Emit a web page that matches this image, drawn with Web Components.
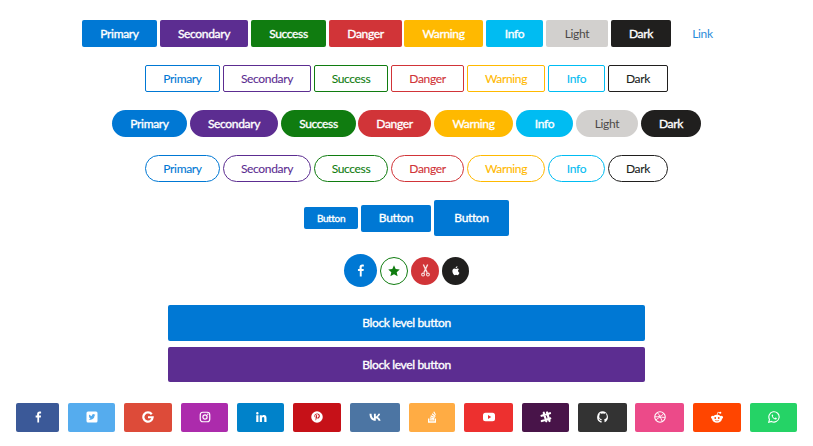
<!DOCTYPE html>
<html>
<head>
<meta charset="utf-8">
<title>Buttons</title>
<style>
  body { margin: 0; background: #fff; font-family: Lato, sans-serif; }
</style>
</head>
<body>
<demo-page>
  <btn-row>
    <x-btn color="primary" w="75">Primary</x-btn>
    <x-btn color="secondary" w="88">Secondary</x-btn>
    <x-btn color="success" w="75">Success</x-btn>
    <x-btn color="danger" w="73">Danger</x-btn>
    <x-btn color="warning" w="79" style="margin-left:-1px">Warning</x-btn>
    <x-btn color="info" w="57">Info</x-btn>
    <x-btn color="light" w="62">Light</x-btn>
    <x-btn color="dark" w="60">Dark</x-btn>
    <x-btn color="link" w="57">Link</x-btn>
  </btn-row>
  <btn-row>
    <x-btn color="primary" w="75" outline>Primary</x-btn>
    <x-btn color="secondary" w="88" outline>Secondary</x-btn>
    <x-btn color="success" w="74" outline>Success</x-btn>
    <x-btn color="danger" w="73" outline>Danger</x-btn>
    <x-btn color="warning" w="78" outline>Warning</x-btn>
    <x-btn color="info" w="57" outline>Info</x-btn>
    <x-btn color="dark" w="60" outline>Dark</x-btn>
  </btn-row>
  <btn-row>
    <x-btn color="primary" w="75" pill>Primary</x-btn>
    <x-btn color="secondary" w="88" pill>Secondary</x-btn>
    <x-btn color="success" w="75" pill>Success</x-btn>
    <x-btn color="danger" w="73" pill style="margin-left:-1px">Danger</x-btn>
    <x-btn color="warning" w="79" pill>Warning</x-btn>
    <x-btn color="info" w="57" pill>Info</x-btn>
    <x-btn color="light" w="62" pill>Light</x-btn>
    <x-btn color="dark" w="60" pill>Dark</x-btn>
  </btn-row>
  <btn-row>
    <x-btn color="primary" w="75" outline pill>Primary</x-btn>
    <x-btn color="secondary" w="88" outline pill>Secondary</x-btn>
    <x-btn color="success" w="74" outline pill>Success</x-btn>
    <x-btn color="danger" w="73" outline pill>Danger</x-btn>
    <x-btn color="warning" w="78" outline pill>Warning</x-btn>
    <x-btn color="info" w="57" outline pill>Info</x-btn>
    <x-btn color="dark" w="60" outline pill>Dark</x-btn>
  </btn-row>
  <btn-row>
    <x-btn color="primary" w="54" h="22" fs="10">Button</x-btn>
    <x-btn color="primary" w="70">Button</x-btn>
    <x-btn color="primary" w="75" h="36">Button</x-btn>
  </btn-row>
  <btn-row>
    <x-btn color="primary" w="33" h="33" circle><x-icon name="facebook" size="13"></x-icon></x-btn>
    <x-btn color="success" w="28" h="28" circle outline><x-icon name="star" size="12"></x-icon></x-btn>
    <x-btn color="danger" w="28" h="28" circle><x-icon name="scissors" size="13"></x-icon></x-btn>
    <x-btn color="dark" w="27" h="28" circle><x-icon name="apple" size="11"></x-icon></x-btn>
  </btn-row>
  <btn-block>
    <x-btn color="primary" h="36" block>Block level button</x-btn>
    <x-btn color="secondary" h="35" block>Block level button</x-btn>
  </btn-block>
  <social-row>
    <x-btn bg="#3b5998" w="43" h="29"><x-icon name="facebook"></x-icon></x-btn>
    <x-btn bg="#55acee" w="47" h="29"><x-icon name="twitter"></x-icon></x-btn>
    <x-btn bg="#dd4b39" w="48" h="29"><x-icon name="google"></x-icon></x-btn>
    <x-btn bg="#ac2bac" w="47" h="29"><x-icon name="instagram"></x-icon></x-btn>
    <x-btn bg="#0082ca" w="47" h="29"><x-icon name="linkedin"></x-icon></x-btn>
    <x-btn bg="#c61118" w="48" h="29"><x-icon name="pinterest"></x-icon></x-btn>
    <x-btn bg="#4c75a3" w="50" h="29"><x-icon name="vk"></x-icon></x-btn>
    <x-btn bg="#ffac44" w="46" h="29"><x-icon name="stack"></x-icon></x-btn>
    <x-btn bg="#ed302f" w="49" h="29"><x-icon name="youtube"></x-icon></x-btn>
    <x-btn bg="#481449" w="47" h="29"><x-icon name="slack"></x-icon></x-btn>
    <x-btn bg="#333333" w="49" h="29"><x-icon name="github"></x-icon></x-btn>
    <x-btn bg="#ec4a89" w="49" h="29" style="margin-left:-1px"><x-icon name="dribbble"></x-icon></x-btn>
    <x-btn bg="#ff4500" w="48" h="29"><x-icon name="reddit"></x-icon></x-btn>
    <x-btn bg="#25d366" w="47" h="29"><x-icon name="whatsapp"></x-icon></x-btn>
  </social-row>
</demo-page>

<script>
// colours for the color="" attribute of x-btn
const COLORS = {
  primary: "#0078d4",
  secondary: "#5c2d91",
  success: "#107c10",
  danger: "#d13438",
  warning: "#ffb900",
  info: "#00bcf2",
  light: "#d2d0ce",
  dark: "#201f1e",
};

// the page column, holds all the rows
class DemoPage extends HTMLElement {
  connectedCallback() {
    const shadow = this.attachShadow({ mode: "open" });
    shadow.innerHTML = `<style>
      :host { display: flex; flex-direction: column; align-items: center; gap: 18px; padding: 20px 0 14px; box-sizing: border-box; }
    </style><slot></slot>`;
  }
}

class BtnRow extends HTMLElement {
  connectedCallback() {
    const shadow = this.attachShadow({ mode: "open" });
    shadow.innerHTML = `<style>
      :host { display: flex; align-items: center; justify-content: center; gap: 3px; }
    </style><slot></slot>`;
  }
}

class BtnBlock extends HTMLElement {
  connectedCallback() {
    const shadow = this.attachShadow({ mode: "open" });
    shadow.innerHTML = `<style>
      :host { display: flex; flex-direction: column; gap: 6px; width: 477px; }
    </style><slot></slot>`;
  }
}

class SocialRow extends HTMLElement {
  connectedCallback() {
    const shadow = this.attachShadow({ mode: "open" });
    shadow.innerHTML = `<style>
      :host { display: flex; justify-content: center; gap: 9px; margin-top: 3px; }
    </style><slot></slot>`;
  }
}

class XBtn extends HTMLElement {
  connectedCallback() {
    const shadow = this.attachShadow({ mode: "open" });
    const name = this.getAttribute("color");
    const isLink = name === "link";
    const base = this.getAttribute("bg") || COLORS[name] || "#0078d4";
    const outline = this.hasAttribute("outline");
    const pill = this.hasAttribute("pill");
    const circle = this.hasAttribute("circle");
    const block = this.hasAttribute("block");
    const w = this.getAttribute("w");
    const h = this.getAttribute("h") || 27;
    const fs = this.getAttribute("fs") || 12;

    let background = base;
    let colour = "#fff";
    let border = "none";
    // the filled buttons use a smeared bold, same advance as the regular
    let stroke = "0.35px";
    let textOpacity = 1;
    if (outline) {
      background = "#fff";
      colour = base;
      border = `1px solid ${base}`;
      stroke = "0.1px";
    }
    if (name === "light") {
      colour = "#323130";
      stroke = "0";
      textOpacity = 0.85;
    }
    if (isLink) {
      background = "transparent";
      colour = "#0078d4";
      stroke = "0";
      textOpacity = 0.85;
    }
    const radius = circle ? "50%" : pill ? "14px" : "2px";

    shadow.innerHTML = `<style>
      :host {
        display: flex; align-items: center; justify-content: center; box-sizing: border-box;
        flex: none;
        width: ${block ? "100%" : w + "px"}; height: ${h}px;
        background: ${background}; color: ${colour}; border: ${border}; border-radius: ${radius};
        font: 400 ${fs}px Lato, sans-serif;
        letter-spacing: -0.35px;
        -webkit-text-stroke: ${stroke} currentColor;
        --icon-cut: ${base};
      }
      .label { display: flex; align-items: center; opacity: ${textOpacity}; padding-bottom: ${circle ? 0 : 1}px; }
    </style><span class="label"><slot></slot></span>`;
  }
}

// svg icons, all on a 24 box, drawn with currentColor and cut with --icon-cut
const ICONS = {
  facebook: `<path fill="currentColor" d="M14.2 23v-10h3.4l.5-3.9h-3.900V6.700c0-1.100.3-1.900 1.900-1.900h2.100V1.300c-.4 0-1.600-.2-3-.2-3 0-5 1.800-5 5.200v2.800H7.300V13h3.400v10z"/>`,
  star: `<path fill="currentColor" d="M12 .5l3.400 7.600 8.100.8-6.100 5.500 1.800 8.100L12 18.400l-7.200 4.100 1.800-8.100L.5 8.900l8.100-.8z"/>`,
  scissors: `<path fill="none" stroke="currentColor" stroke-width="2.600" opacity=".85" d="M8 1l7 15M16 1L9 16"/><circle cx="7.500" cy="19.500" r="2.600" fill="none" stroke="currentColor" stroke-width="2" opacity=".85"/><circle cx="16.500" cy="19.500" r="2.600" fill="none" stroke="currentColor" stroke-width="2" opacity=".85"/>`,
  apple: `<path fill="currentColor" d="M17.600 12.700c0-2.200 1.800-3.300 1.900-3.300-1-1.500-2.600-1.700-3.200-1.700-1.400-.1-2.700.8-3.400.8-.7 0-1.800-.8-3-.8C8.300 7.700 6.900 8.600 6 10c-1.700 2.900-.4 7.300 1.200 9.700.8 1.200 1.800 2.500 3 2.400 1.200 0 1.700-.8 3.100-.8s1.900.8 3.100.8c1.300 0 2.100-1.200 2.900-2.300.9-1.300 1.300-2.600 1.300-2.700-.1 0-2.900-1.100-3-4.400zM15.300 5.600c.7-.8 1.100-1.900 1-3.100-1 0-2.200.7-2.900 1.500-.6.700-1.200 1.900-1 3 1.100.1 2.200-.6 2.900-1.400z"/>`,
  twitter: `<rect x="1" y="1" width="22" height="22" rx="3" fill="currentColor"/><path fill="var(--icon-cut)" d="M19 7.600c-.5.2-1 .4-1.600.4.600-.3 1-.8 1.200-1.500-.5.300-1.100.5-1.800.7a2.800 2.800 0 0 0-4.800 2.600C9.700 9.700 7.600 8.600 6.200 6.900c-.7 1.300-.3 2.900.9 3.700-.4 0-.9-.1-1.300-.3 0 1.400 1 2.600 2.300 2.800-.4.100-.9.100-1.300 0 .3 1.200 1.400 2 2.600 2-1.200.9-2.700 1.400-4.200 1.200 3.200 2 7.500 1.400 10-1.600 1.200-1.500 1.800-3.200 1.700-5.200.6-.4 1.100-1 1.400-1.500z"/>`,
  google: `<path fill="none" stroke="currentColor" stroke-width="4.400" d="M19.500 6.500A9.300 9.300 0 1 0 21.300 12.500H12"/>`,
  instagram: `<rect x="2.500" y="2.500" width="19" height="19" rx="5" fill="none" stroke="currentColor" stroke-width="2.400"/><circle cx="12" cy="12" r="4.200" fill="none" stroke="currentColor" stroke-width="2.400"/><circle cx="17.500" cy="6.500" r="1.400" fill="currentColor"/>`,
  linkedin: `<path fill="currentColor" d="M2.500 8.500h4.400V22H2.500zM4.700 2a2.400 2.400 0 1 1 0 4.900 2.400 2.400 0 0 1 0-4.900zM9.500 8.500h4.200v1.900c.6-1.100 2-2.200 4.100-2.200 4.400 0 5.200 2.800 5.200 6.500V22h-4.400v-6.600c0-1.600 0-3.600-2.200-3.600s-2.500 1.700-2.500 3.500V22H9.500z"/>`,
  pinterest: `<circle cx="12" cy="12" r="11.500" fill="currentColor"/><path fill="var(--icon-cut)" d="M12.300 5c-3.600 0-5.500 2.400-5.500 5 0 1.200.7 2.700 1.700 3.200.2.100.3 0 .3-.1l.3-1c0-.1 0-.2-.1-.3-.4-.5-.7-1.200-.7-1.900 0-1.900 1.400-3.600 3.700-3.600 2 0 3.500 1.400 3.500 3.300 0 2.200-1.100 3.700-2.600 3.700-.8 0-1.400-.7-1.200-1.500.2-1 .7-2 .7-2.700 0-.6-.3-1.100-1-1.100-.8 0-1.400.8-1.400 1.900 0 .7.200 1.100.2 1.100l-1 4.100c-.2.900 0 2.700 0 3.700 0 .1.200.1.200 0 .2-.3 1-1.500 1.300-2.500l.6-2.200c.3.600 1.100 1 2 1 2.600 0 4.400-2.300 4.400-5.200C17.900 7 15.500 5 12.300 5z"/>`,
  vk: `<path fill="currentColor" d="M13 19.500c-7.500 0-11.700-5-12-14h4c.2 6.300 2.800 8.900 4.900 9.400V5.500h3.700v5.400c2.100-.2 4.300-2.700 5-5.400h3.700c-.6 3.400-3 5.700-4.800 6.700 1.800.9 4.600 3 5.700 7.300h-4c-.9-2.700-3-4.700-5.600-5v5z"/>`,
  stack: `<path fill="currentColor" d="M4 15h2.500v5.500h11V15H20v8.500H4zM7.500 16.500h9V19h-9zM8 12.500l8.600 1.600-.4 2.400-8.600-1.600zM9.800 8.500l8 3.400-1 2.300-8-3.400zM13 4.500l6.500 5.500-1.600 1.900-6.500-5.500zM16.500 1l3.500 6-2 1.200-3.500-6z"/>`,
  youtube: `<path fill="currentColor" fill-rule="evenodd" d="M5 3.500h14a5 5 0 0 1 5 5v7a5 5 0 0 1-5 5H5a5 5 0 0 1-5-5v-7a5 5 0 0 1 5-5zM10 8v8l6.500-4z"/>`,
  slack: `<path fill="none" stroke="currentColor" stroke-width="4.400" stroke-linecap="round" d="M8 3.500l5 17M14.500 3l5 17M3.500 9.500l17-5M4 20l17-5" transform="translate(-.5 0)"/>`,
  github: `<path fill="currentColor" d="M12 .5a11.700 11.700 0 0 0-3.700 22.800c.6.100.8-.3.8-.6v-3.100c-3.300.7-4-1.400-4-1.400-.5-1.400-1.300-1.800-1.300-1.800-1-.7.100-.7.100-.7 1.200.1 1.800 1.200 1.800 1.200 1 1.800 2.800 1.300 3.400 1 .1-.8.400-1.300.7-1.600-2.600-.3-5.400-1.300-5.400-5.800 0-1.300.5-2.300 1.200-3.100-.1-.3-.5-1.500.1-3.100 0 0 1-.3 3.300 1.200a11.400 11.400 0 0 1 6 0c2.300-1.500 3.300-1.200 3.300-1.200.6 1.600.2 2.800.1 3.100.8.800 1.200 1.900 1.200 3.100 0 4.500-2.800 5.500-5.400 5.800.4.400.8 1 .8 2.200v3.200c0 .3.200.7.800.6A11.700 11.700 0 0 0 12 .5z"/>`,
  dribbble: `<circle cx="12" cy="12" r="10.500" fill="none" stroke="currentColor" stroke-width="2.200"/><path fill="none" stroke="currentColor" stroke-width="1.800" d="M7 3.500c3 3.500 6.500 9.500 9.500 17.500M2 11.500c7 .5 13-.5 17-6M4 18.500c3-5 8-7.500 17.500-5.500"/>`,
  reddit: `<circle cx="18.500" cy="3.500" r="2.200" fill="currentColor"/><path fill="none" stroke="currentColor" stroke-width="1.400" d="M12.300 8l1.400-5.500 4.500 1"/><circle cx="3" cy="12.500" r="3" fill="currentColor"/><circle cx="21" cy="12.500" r="3" fill="currentColor"/><ellipse cx="12" cy="15.500" rx="10" ry="8" fill="currentColor"/><circle cx="8.500" cy="14" r="1.800" fill="var(--icon-cut)"/><circle cx="15.500" cy="14" r="1.800" fill="var(--icon-cut)"/><path fill="none" stroke="var(--icon-cut)" stroke-width="1.200" d="M8 18.500c2 1.500 6 1.500 8 0"/>`,
  whatsapp: `<path fill="none" stroke="currentColor" stroke-width="2.200" d="M1.500 22.500l1.500-5.700A10.300 10.300 0 1 1 7 20.800z"/><path fill="currentColor" d="M9 6.800c-.5 0-1.600.8-1.600 2.500 0 2.500 3.800 7 7.400 7.600 1.500.2 2.700-.9 2.800-1.900.1-.6-.1-.8-.3-.9l-2.100-1c-.3-.1-.5 0-.7.200l-.8 1c-.2.200-.4.200-.6.100-1.600-.7-2.800-1.900-3.500-3.300-.1-.2 0-.4.100-.5l.6-.8c.1-.2.100-.4 0-.6l-.9-2.100c-.1-.2-.2-.3-.4-.3z"/>`,
};

class XIcon extends HTMLElement {
  connectedCallback() {
    const shadow = this.attachShadow({ mode: "open" });
    const size = this.getAttribute("size") || 12;
    shadow.innerHTML = `<style>
      :host { display: inline-flex; width: ${size}px; height: ${size}px; -webkit-text-stroke: 0; }
      svg { width: 100%; height: 100%; display: block; }
    </style><svg viewBox="0 0 24 24">${ICONS[this.getAttribute("name")]}</svg>`;
  }
}

customElements.define("demo-page", DemoPage);
customElements.define("btn-row", BtnRow);
customElements.define("btn-block", BtnBlock);
customElements.define("social-row", SocialRow);
customElements.define("x-btn", XBtn);
customElements.define("x-icon", XIcon);
</script>
</body>
</html>
